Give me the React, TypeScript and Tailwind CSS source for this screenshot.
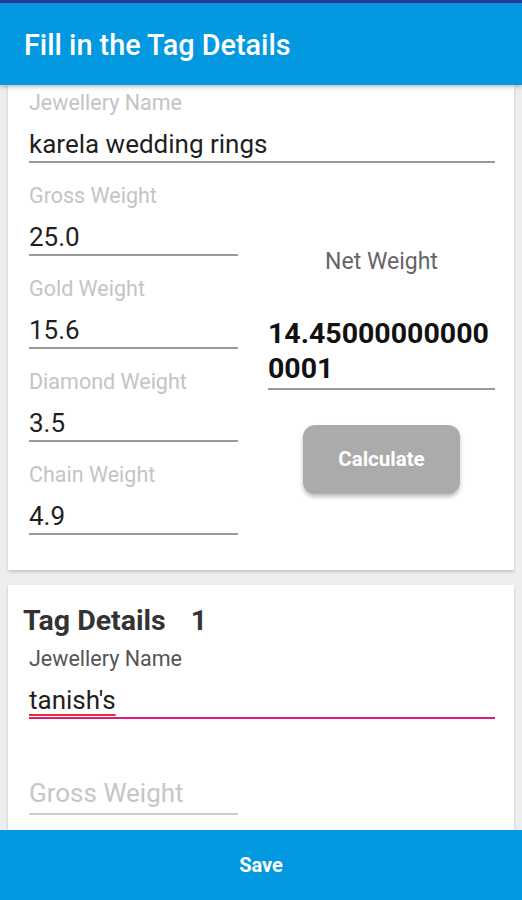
import type { ReactNode } from 'react'

const font = { fontFamily: 'Roboto, "Noto Sans", Arial, sans-serif' }

interface FieldProps {
  label: string
  value: string
  wide?: boolean
}

// Filled-in field: small gray label, value, gray underline
function Field({ label, value, wide }: FieldProps) {
  return (
    <div className={wide ? 'w-full' : 'w-[209px]'}>
      <div className="h-[24px] text-[21.5px] leading-[24px] text-[#c4c4c4]">{label}</div>
      <div className="mt-[14px] h-[30px] text-[26px] leading-[30px] text-[#1f1f1f]">{value}</div>
      <div className="mt-[2px] h-[2px] bg-[#9a9a9a]" />
    </div>
  )
}

function Card({ children, className }: { children: ReactNode; className?: string }) {
  return (
    <div className={`mx-[8px] bg-white shadow-[0_2px_3px_rgba(0,0,0,0.18)] ${className ?? ''}`}>
      {children}
    </div>
  )
}

export default function App() {
  return (
    <div className="flex h-[900px] w-[522px] flex-col overflow-hidden bg-[#eeeeee]" style={font}>
      {/* status strip */}
      <div className="h-[3px] bg-[#2e3a9b]" />

      {/* app bar */}
      <div className="z-10 flex h-[82px] items-center bg-[#0399e1] px-[24px] pt-[4px] shadow-[0_2px_4px_rgba(0,0,0,0.25)]">
        <h1 className="text-[28.8px] font-medium text-white">Fill in the Tag Details</h1>
      </div>

      {/* scrolled content */}
      <div className="flex-1 overflow-hidden">
        <Card className="pb-[35px] pl-[21px] pr-[19px] pt-[6px]">
          <Field label="Jewellery Name" value="karela wedding rings" wide />

          <div className="mt-[21px] flex justify-between">
            <div className="flex flex-col gap-[21px]">
              <Field label="Gross Weight" value="25.0" />
              <Field label="Gold Weight" value="15.6" />
              <Field label="Diamond Weight" value="3.5" />
              <Field label="Chain Weight" value="4.9" />
            </div>

            <div className="flex w-[227px] flex-col">
              <div className="mt-[64px] text-center text-[23px] leading-[28px] text-[#666666]">Net Weight</div>
              <div className="mt-[40px] text-[28.5px] font-bold leading-[35px] text-[#111111]">
                14.45000000000
                <br />
                0001
              </div>
              <div className="mt-[2px] h-[2px] bg-[#9a9a9a]" />
              <button className="mx-auto mt-[35px] h-[69px] w-[157px] rounded-[12px] bg-[#ababab] text-[20.5px] font-bold text-white shadow-[0_3px_4px_rgba(0,0,0,0.25)]">
                Calculate
              </button>
            </div>
          </div>
        </Card>

        <Card className="mt-[15px] h-[300px] pl-[21px] pr-[19px] pt-[20px]">
          <div className="ml-[-6px] flex items-center text-[28.5px] font-bold leading-[32px] text-[#333333]">
            <span>Tag Details</span>
            <span className="ml-[25px]">1</span>
          </div>

          <div className="mt-[10px] h-[24px] text-[21.5px] leading-[24px] text-[#555555]">Jewellery Name</div>
          <div className="mt-[14px] h-[30px] text-[26px] leading-[30px] text-[#1f1f1f]">
            <span className="underline decoration-[#e0342c] decoration-2 underline-offset-[5px]">tanish's</span>
          </div>
          <div className="mt-[2px] h-[2px] bg-[#e8177a]" />

          <div className="mt-[58px] w-[209px]">
            <div className="h-[32px] text-[26px] leading-[32px] text-[#c6c6c6]">Gross Weight</div>
            <div className="mt-[4px] h-[2px] bg-[#cccccc]" />
          </div>
        </Card>
      </div>

      {/* save bar */}
      <button className="z-10 flex h-[70px] shrink-0 items-center justify-center bg-[#0399e1] text-[20px] font-bold text-white">
        Save
      </button>
    </div>
  )
}
